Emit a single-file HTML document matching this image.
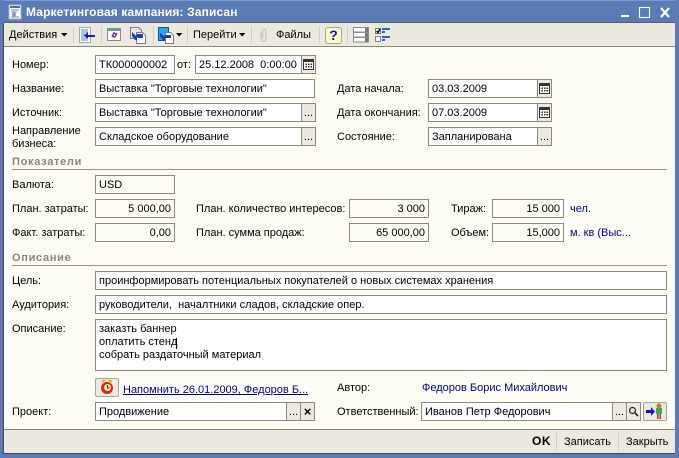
<!DOCTYPE html>
<html><head><meta charset="utf-8">
<style>
html,body{margin:0;padding:0;width:679px;height:458px;overflow:hidden;background:#fdfdf6}
body{position:relative;font:11px "Liberation Sans",sans-serif;color:#000}
.a,.l,.f,.b,.s{position:absolute;box-sizing:border-box}
.l{white-space:nowrap;line-height:13px}
.f{border:1px solid #8e8a7a;background:#fff;height:19px;line-height:19px;padding:0 3px;white-space:nowrap;overflow:hidden}
.f.r{text-align:right;background:#fdfdf6}
.f.n{background:#fdfdf6}
.b{border:1px solid #8e8a7a;background:#ece9e0;height:19px;width:15px;text-align:center;line-height:19px;font-size:11px;overflow:hidden}
.cal svg,.g svg{display:block;margin:3px auto 0}
.s{width:1px;height:18px;top:26px;background:#d8cfc4}
.h{font-weight:bold;color:#8b8774;letter-spacing:.7px}
.ln{height:1px;background:#9a9684}
.u{color:#00008b}
</style></head><body>
<!-- window frame -->
<div class="a" style="left:0;top:0;width:679px;height:23px;background:#5a7bb3;border-top:1px solid #7d9ad0"></div>
<div class="a" style="left:0;top:0;width:3px;height:458px;background:#5a7bb3"></div>
<div class="a" style="left:675px;top:0;width:4px;height:458px;background:#5a7bb3"></div>
<div class="a" style="left:0;top:454px;width:679px;height:4px;background:#5a7bb3"></div>
<div class="a" style="left:3px;top:22px;width:1px;height:432px;background:#45454a"></div>
<div class="a" style="left:3px;top:453px;width:672px;height:1px;background:#45454a"></div>
<div class="a" style="left:3px;top:22px;width:672px;height:1px;background:#5e5e60"></div>
<!-- title -->
<svg class="a" style="left:7px;top:4px" width="16" height="16"><rect x="2" y="1" width="12" height="14" fill="#fbfbf4" stroke="#a8b4c8"/><rect x="3" y="2" width="10" height="2" fill="#4a6aa8"/><path d="M4 6h8M4 8h6M4 13h8" stroke="#7a8aa8"/><circle cx="7" cy="10.500" r="2" fill="#7aa0c8"/></svg>
<div class="l" style="left:26px;top:5px;font-size:12px;line-height:15px;font-weight:bold;color:#fff;letter-spacing:.13px">Маркетинговая кампания: Записан</div>
<svg class="a" style="left:618px;top:5px" width="56" height="14"><path d="M3 11h8" stroke="#fff" stroke-width="2"/><rect x="21.500" y="2.500" width="10" height="10" fill="none" stroke="#fff" stroke-width="1.100"/><path d="M43 3l8 9M51 3l-8 9" stroke="#fff" stroke-width="2.200"/></svg>
<!-- toolbar -->
<div class="a" style="left:4px;top:23px;width:671px;height:24px;background:#ece9e0;border-bottom:1px solid #8c8878"></div>
<div class="l" style="left:9px;top:29px">Действия</div>
<svg class="a" style="left:61px;top:33px" width="7" height="4"><path d="M0 0h6.500L3.200 3.500z"/></svg>
<div class="s" style="left:73px"></div>
<svg class="a" style="left:79px;top:26px" width="17" height="18"><rect x="0.500" y="1.500" width="11" height="15" fill="#fff" stroke="#9ab"/><path d="M2 4h7M2 6h7M2 8h4M2 10h4M2 12h7M2 14h7" stroke="#48b"/><path d="M16 9H9V6L5 9.500 9 13v-2h7z" fill="#1a1ad0"/></svg>
<div class="s" style="left:101px"></div>
<svg class="a" style="left:107px;top:28px" width="15" height="14"><rect x=".5" y=".5" width="13" height="12" fill="#fff" stroke="#8a8a9a"/><rect x="1" y="1" width="12" height="2" fill="#6a8cc0"/><circle cx="2.500" cy="2" r="1" fill="#3c3"/><path d="M5 9l2-4 2 1" fill="none" stroke="#24c" stroke-width="1.500"/><path d="M10 5L8 9 6 8.500" fill="none" stroke="#c22" stroke-width="1.500"/></svg>
<svg class="a" style="left:130px;top:27px" width="17" height="17"><path d="M.5.500h8l3 3v8H.5z" fill="#e8e8ee" stroke="#778"/><path d="M6.500 5.500h6l3 3v8h-9z" fill="#fff" stroke="#778"/><path d="M2 5l4 4 1-2h6v4H8l-1-1v3H5L2 9z" fill="#1c3cb8"/></svg>
<div class="s" style="left:153px"></div>
<svg class="a" style="left:158px;top:27px" width="16" height="17"><rect x=".5" y=".5" width="10" height="13" fill="#2ea4ee" stroke="#158"/><path d="M7.500 5.500h5l3 3v8h-8z" fill="#fff" stroke="#778"/><path d="M2 6l4 3 1-1h6v3H7v2H5L2 10z" fill="#1c3cb8"/></svg>
<svg class="a" style="left:176px;top:33px" width="7" height="4"><path d="M0 0h6.500L3.200 3.500z"/></svg>
<div class="s" style="left:187px"></div>
<div class="l" style="left:193px;top:29px">Перейти</div>
<svg class="a" style="left:239px;top:33px" width="7" height="4"><path d="M0 0h6.500L3.200 3.500z"/></svg>
<div class="s" style="left:251px"></div>
<svg class="a" style="left:260px;top:28px" width="7" height="15"><path d="M1 4v7a2.500 2.500 0 005 0V3a1.700 1.700 0 00-3.500 0v8" fill="none" stroke="#c6c4ba" stroke-width="1.200"/></svg>
<div class="l" style="left:276px;top:29px">Файлы</div>
<div class="s" style="left:319px"></div>
<div class="a" style="left:325px;top:27px;width:17px;height:17px;background:#fbfbc8;border:1px solid #a8a594;border-radius:3px;color:#1414b0;font:bold 14px/15px 'Liberation Sans',sans-serif;text-align:center">?</div>
<div class="s" style="left:347px"></div>
<svg class="a" style="left:353px;top:27px" width="16" height="17"><g fill="#fff" stroke="#8a8a80"><rect x=".5" y=".5" width="15" height="4.500"/><rect x=".5" y="5.500" width="15" height="4.500"/><rect x=".5" y="10.500" width="15" height="4.500"/></g><path d="M12 1h3v4h-3zM12 6h3v4h-3zM12 11h3v4h-3z" fill="#777"/><rect x="0" y="15" width="16" height="1" fill="#bbb"/></svg>
<svg class="a" style="left:375px;top:27px" width="18" height="17"><rect x=".5" y="1.500" width="5" height="5" fill="#fff" stroke="#777"/><path d="M1.500 4l1.500 1.500L5 2" fill="none" stroke="#000" stroke-width="1.400"/><rect x=".5" y="9.500" width="5" height="5" fill="#fff" stroke="#888"/><path d="M7 1h8v2H7zM7 4h3v2H7zM7 9h8v2H7zM7 12h3v2H7z" fill="#2a62d0"/></svg>

<!-- Row: Номер -->
<div class="l" style="left:12px;top:59px">Номер:</div>
<div class="f" style="left:95px;top:55px;width:80px">ТК000000002</div>
<div class="l" style="left:177px;top:59px">от:</div>
<div class="f" style="left:195px;top:55px;width:107px">25.12.2008&nbsp; 0:00:00</div>
<div class="b cal" style="left:301px;top:55px"><svg width="11" height="11"><path d="M.5.500h10v10H.5z" fill="#fff" stroke="#333"/><path d="M1 1h9v2H1zM2.500 4.500h1.500v1.500H2.500zM5 4.500h1.500v1.500H5zM7.500 4.500h1.500v1.500H7.500zM2.500 7h1.500v1.500H2.500zM5 7h1.500v1.500H5zM7.500 7h1.500v1.500H7.500z" fill="#333"/></svg></div>

<div class="l" style="left:12px;top:83px">Название:</div>
<div class="f" style="left:95px;top:79px;width:220px">Выставка "Торговые технологии"</div>
<div class="l" style="left:12px;top:107px">Источник:</div>
<div class="f" style="left:95px;top:103px;width:207px">Выставка "Торговые технологии"</div>
<div class="b" style="left:301px;top:103px">...</div>
<div class="l" style="left:12px;top:125px">Направление<br>бизнеса:</div>
<div class="f" style="left:95px;top:127px;width:207px">Складское оборудование</div>
<div class="b" style="left:301px;top:127px">...</div>

<div class="l" style="left:337px;top:83px">Дата начала:</div>
<div class="f" style="left:428px;top:79px;width:110px">03.03.2009</div>
<div class="b cal" style="left:537px;top:79px"><svg width="11" height="11"><path d="M.5.500h10v10H.5z" fill="#fff" stroke="#333"/><path d="M1 1h9v2H1zM2.500 4.500h1.500v1.500H2.500zM5 4.500h1.500v1.500H5zM7.500 4.500h1.500v1.500H7.500zM2.500 7h1.500v1.500H2.500zM5 7h1.500v1.500H5zM7.500 7h1.500v1.500H7.500z" fill="#333"/></svg></div>
<div class="l" style="left:337px;top:107px">Дата окончания:</div>
<div class="f" style="left:428px;top:103px;width:110px">07.03.2009</div>
<div class="b cal" style="left:537px;top:103px"><svg width="11" height="11"><path d="M.5.500h10v10H.5z" fill="#fff" stroke="#333"/><path d="M1 1h9v2H1zM2.500 4.500h1.500v1.500H2.500zM5 4.500h1.500v1.500H5zM7.500 4.500h1.500v1.500H7.500zM2.500 7h1.500v1.500H2.500zM5 7h1.500v1.500H5zM7.500 7h1.500v1.500H7.500z" fill="#333"/></svg></div>
<div class="l" style="left:337px;top:131px">Состояние:</div>
<div class="f" style="left:428px;top:127px;width:110px">Запланирована</div>
<div class="b" style="left:537px;top:127px">...</div>

<!-- Показатели -->
<div class="l h" style="left:12px;top:156px">Показатели</div>
<div class="a ln" style="left:12px;top:169px;width:655px"></div>
<div class="l" style="left:12px;top:179px">Валюта:</div>
<div class="f n" style="left:95px;top:175px;width:80px">USD</div>
<div class="l" style="left:12px;top:203px">План. затраты:</div>
<div class="f r" style="left:95px;top:199px;width:80px">5 000,00</div>
<div class="l" style="left:12px;top:227px">Факт. затраты:</div>
<div class="f r" style="left:95px;top:223px;width:80px">0,00</div>
<div class="l" style="left:196px;top:203px">План. количество интересов:</div>
<div class="f r" style="left:349px;top:199px;width:80px">3 000</div>
<div class="l" style="left:196px;top:227px">План. сумма продаж:</div>
<div class="f r" style="left:349px;top:223px;width:80px">65 000,00</div>
<div class="l" style="left:451px;top:203px">Тираж:</div>
<div class="f r" style="left:492px;top:199px;width:72px">15 000</div>
<div class="l u" style="left:570px;top:203px">чел.</div>
<div class="l" style="left:451px;top:227px">Объем:</div>
<div class="f r" style="left:492px;top:223px;width:72px">15,000</div>
<div class="l u" style="left:570px;top:227px">м. кв (Выс...</div>

<!-- Описание -->
<div class="l h" style="left:12px;top:252px">Описание</div>
<div class="a ln" style="left:12px;top:265px;width:655px"></div>
<div class="l" style="left:12px;top:275px">Цель:</div>
<div class="f" style="left:95px;top:271px;width:572px">проинформировать потенциальных покупателей о новых системах хранения</div>
<div class="l" style="left:12px;top:299px">Аудитория:</div>
<div class="f" style="left:95px;top:295px;width:572px">руководители,&nbsp; началтники сладов, складские опер.</div>
<div class="l" style="left:12px;top:323px">Описание:</div>
<div class="f" style="left:95px;top:319px;width:572px;height:52px;line-height:13px;padding-top:3px">заказть баннер<br>оплатить стенд<br>собрать раздаточный материал</div>
<div class="a" style="left:176px;top:338px;width:1px;height:11px;background:#000"></div>

<!-- Напомнить -->
<div class="a" style="left:95px;top:378px;width:24px;height:19px;background:#ece9e0;border:1px solid #a8a594;border-radius:2px"></div>
<svg class="a" style="left:99px;top:379px" width="16" height="16"><path d="M3 3l3-2M13 3L10 1" stroke="#f0b010" stroke-width="2"/><circle cx="8" cy="9" r="6" fill="#d8281c"/><circle cx="8.500" cy="8.500" r="3.500" fill="#f4e8a0"/><path d="M8.500 6v3h2" stroke="#333" fill="none"/></svg>
<div class="l" style="left:123px;top:384px;color:#00008b;text-decoration:underline">Напомнить 26.01.2009, Федоров Б...</div>
<div class="l" style="left:337px;top:382px">Автор:</div>
<div class="l u" style="left:422px;top:382px">Федоров Борис Михайлович</div>

<div class="l" style="left:12px;top:406px">Проект:</div>
<div class="f" style="left:95px;top:402px;width:192px">Продвижение</div>
<div class="b" style="left:286px;top:402px">...</div>
<div class="b" style="left:300px;top:402px;font-weight:bold;font-size:13px;line-height:17px">×</div>
<div class="l" style="left:337px;top:406px">Ответственный:</div>
<div class="f" style="left:421px;top:402px;width:192px">Иванов Петр Федорович</div>
<div class="b" style="left:612px;top:402px">...</div>
<div class="b g" style="left:626px;top:402px"><svg width="11" height="11"><circle cx="4.500" cy="4.500" r="3" fill="none" stroke="#222" stroke-width="1.200"/><path d="M7 7l3 3" stroke="#222" stroke-width="1.600"/></svg></div>
<div class="a" style="left:643px;top:402px;width:24px;height:19px;background:#ece9e0;border:1px solid #a8a594;border-radius:2px"></div>
<svg class="a" style="left:645px;top:403px" width="20" height="17"><path d="M1 7h5V4l4 4.500L6 13v-3H1z" fill="#1414c0"/><circle cx="14" cy="3" r="2.500" fill="#c88030"/><rect x="11" y="5" width="6" height="6" fill="#38a860"/><path d="M12 11h1.500v5H12zM14.500 11H16v5h-1.500z" fill="#b03020"/></svg>

<!-- footer -->
<div class="a" style="left:4px;top:429px;width:671px;height:24px;background:#ece9e0;border-top:1px solid #8c8878"></div>
<div class="l" style="left:532px;top:435px;font-weight:bold;font-size:12px;letter-spacing:.5px">OK</div>
<div class="s" style="left:556px;top:433px;height:17px"></div>
<div class="l" style="left:564px;top:436px">Записать</div>
<div class="s" style="left:618px;top:433px;height:17px"></div>
<div class="l" style="left:626px;top:436px">Закрыть</div>
</body></html>
